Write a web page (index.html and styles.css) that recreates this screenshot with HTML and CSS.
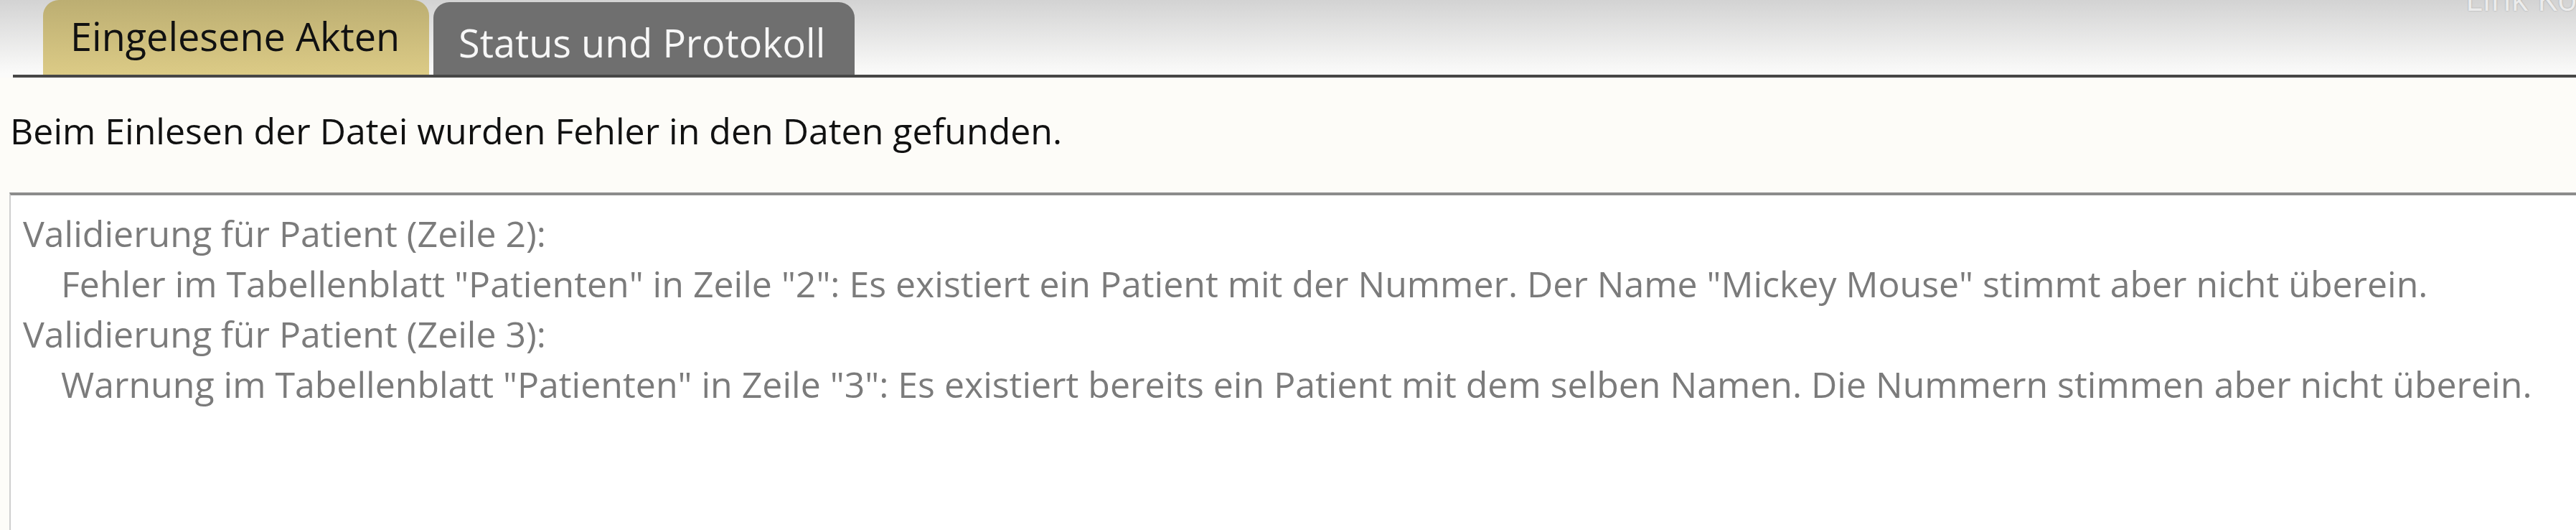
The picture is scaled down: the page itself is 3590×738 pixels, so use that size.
FILE: index.html
```html
<!DOCTYPE html>
<html>
<head>
<title>Import</title>
<link rel="stylesheet" href="styles.css">
</head>
<body>
<div class="header">
  <div class="tabs">
    <div class="tab active">Eingelesene Akten</div>
    <div class="tab">Status und Protokoll</div>
    <div class="link">Link Kopieren</div>
  </div>
</div>
<p class="message">Beim Einlesen der Datei wurden Fehler in den Daten gefunden.</p>
<div class="log">
  <div class="entry">Validierung für Patient (Zeile 2):</div>
  <div class="detail">Fehler im Tabellenblatt "Patienten" in Zeile "2": Es existiert ein Patient mit der Nummer. Der Name "Mickey Mouse" stimmt aber nicht überein.</div>
  <div class="entry">Validierung für Patient (Zeile 3):</div>
  <div class="detail">Warnung im Tabellenblatt "Patienten" in Zeile "3": Es existiert bereits ein Patient mit dem selben Namen. Die Nummern stimmen aber nicht überein.</div>
</div>
</body>
</html>
```

FILE: styles.css
```css
body {
    margin: 0;
    background: #fdfcf8;
    font-family: "Open Sans", "Noto Sans", sans-serif;
    overflow: hidden;
}

.header {
    height: 108px;
    background: linear-gradient(#d3d3d3, #fbfbfa 95%);
    overflow: hidden;
}

.tabs {
    display: flex;
    align-items: flex-end;
    height: 104px;
    margin-left: 18px;
    padding-left: 42px;
    border-bottom: 4px solid #474747;
}

.tab {
    height: 81px;
    padding: 20px 41px 0 35px;
    margin-right: 6px;
    border-radius: 22px 22px 0 0;
    background: #6f6f6f;
    color: #f7f7f7;
    font-size: 54px;
    line-height: 72px;
    white-space: nowrap;
}

.tab.active {
    height: 90px;
    padding: 14px 41px 0 38px;
    background: linear-gradient(#bcae72, #dccb86);
    color: #111;
}

.link {
    margin-left: auto;
    margin-right: -140px;
    align-self: flex-start;
    margin-top: -34px;
    color: #ececec;
    font-size: 46px;
    line-height: 62px;
    white-space: nowrap;
    text-shadow: 0 0 2px #9a9a9a;
}

.message {
    margin: 0;
    padding: 40px 0 0 14px;
    height: 120px;
    font-size: 50px;
    color: #111;
}

.log {
    margin-left: 13px;
    margin-right: -20px;
    height: 600px;
    padding: 18px 0 0 17px;
    background: #fff;
    border-top: 4px solid #8c8c8c;
    border-left: 2px solid #cfcfcf;
    font-size: 50px;
    line-height: 70px;
    color: #7b7b7b;
}

.detail {
    padding-left: 53px;
}
```
